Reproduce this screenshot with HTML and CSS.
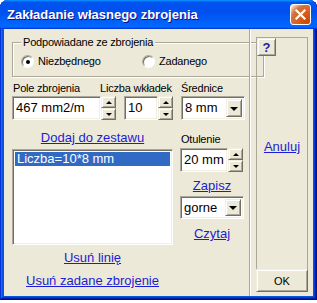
FILE: index.html
```html
<!DOCTYPE html>
<html lang="pl">
<head>
    <meta charset="UTF-8">
    <title>Zakładanie własnego zbrojenia</title>
    <link rel="stylesheet" href="styles.css">
</head>
<body>
    <div class="window">
        <div class="titlebar">
            <span class="title">Zakładanie własnego zbrojenia</span>
            <span class="close"><svg width="13" height="13" viewBox="0 0 13 13"><path d="M2.5 2.5 L10.5 10.5 M10.5 2.5 L2.5 10.5" stroke="#fff" stroke-width="2.2" stroke-linecap="square"/></svg></span>
        </div>
        <div class="client">
            <div class="main">
                <fieldset class="group">
                    <legend>Podpowiadane ze zbrojenia</legend>
                    <div class="radios">
                        <span class="radio"><span class="circle checked"></span>Niezbędnego</span>
                        <span class="radio"><span class="circle"></span>Zadanego</span>
                    </div>
                </fieldset>
                <div class="labels">
                    <span class="lbl lbl-pole">Pole zbrojenia</span>
                    <span class="lbl lbl-liczba">Liczba wkładek</span>
                    <span class="lbl">Średnice</span>
                </div>
                <div class="inputs">
                    <div class="spinbox">
                        <span class="edit edit-pole">467 mm2/m</span>
                        <span class="spin"><span class="btn up"></span><span class="btn down"></span></span>
                    </div>
                    <div class="spinbox">
                        <span class="edit edit-liczba">10</span>
                        <span class="spin"><span class="btn up"></span><span class="btn down"></span></span>
                    </div>
                    <div class="combo">
                        <span class="combo-text">8 mm</span>
                        <span class="btn drop"></span>
                    </div>
                </div>
                <div class="lower">
                    <div class="listcol">
                        <a class="link link-dodaj" href="#">Dodaj do zestawu</a>
                        <div class="list">
                            <div class="item selected">Liczba=10*8 mm</div>
                        </div>
                        <a class="link link-linia" href="#">Usuń linię</a>
                        <a class="link link-usun" href="#">Usuń zadane zbrojenie</a>
                    </div>
                    <div class="optcol">
                        <span class="lbl lbl-otul">Otulenie</span>
                        <div class="spinbox spin-otul">
                            <span class="edit edit-otul">20 mm</span>
                            <span class="spin"><span class="btn up"></span><span class="btn down"></span></span>
                        </div>
                        <a class="link link-zapisz" href="#">Zapisz</a>
                        <div class="combo combo-gorne">
                            <span class="combo-text">gorne</span>
                            <span class="btn drop"></span>
                        </div>
                        <a class="link link-czytaj" href="#">Czytaj</a>
                    </div>
                </div>
            </div>
            <div class="side">
                <div class="panel">
                    <span class="btn help">?</span>
                    <a class="link link-anuluj" href="#">Anuluj</a>
                    <span class="btn ok">OK</span>
                </div>
            </div>
        </div>
    </div>
</body>
</html>
```

FILE: styles.css
```css
body { margin: 0; background: #fff; font-family: "Liberation Sans", Arial, sans-serif; }

/* window frame */
.window { width: 317px; height: 300px; display: flex; flex-direction: column; background: #0855dd; border-radius: 8px 8px 0 0; box-shadow: inset -1px -1px #00138c, inset 1px 1px #0831d9, inset -2px -2px #001ea0, inset 2px 2px #166aee, inset -3px -3px #003bda, inset 3px 3px #0855dd; }
.titlebar { height: 29px; display: flex; align-items: center; justify-content: space-between; padding: 0 6px 0 7px; border-radius: 8px 8px 0 0; background: linear-gradient(180deg, #0997ff, #0053ee 8%, #0050ee 40%, #06f 88%, #06f 93%, #005bff 95%, #003dd7 96%, #003dd7); }
.title { font-weight: bold; font-size: 13px; color: #fff; text-shadow: 1px 1px #0f1089; }
.close { width: 19px; height: 19px; border: 1px solid #fff; border-radius: 3px; display: flex; align-items: center; justify-content: center; background: radial-gradient(circle at 90% 90%, #cc4600 0%, #dc6527 55%, #cd7546 70%, #ffccb2 90%, #fff 100%); }
.client { flex: 1; margin: 0 4px 4px 4px; background: #ece9d8; display: flex; color: #000; }

/* left part */
.main { width: 245px; padding: 6px 0 0 8px; box-sizing: border-box; }
.group { margin: 0; width: 234px; height: 42px; box-sizing: border-box; padding: 0 0 0 8px; border: 1px solid #aca899; box-shadow: inset 1px 1px #fff, 1px 1px #fff; }
.group legend { padding: 0 2px; font-size: 11px; letter-spacing: -0.2px; line-height: 14px; background: #ece9d8; }
.radios { display: flex; margin-top: 5px; font-size: 11px; letter-spacing: -0.2px; line-height: 14px; }
.radio { width: 121px; display: flex; align-items: center; gap: 4px; }
.circle { width: 11px; height: 11px; border-radius: 50%; background: #fff; border: 1px solid; border-color: #aca899 #fff #fff #aca899; box-shadow: inset 1px 1px #716f64; position: relative; }
.circle.checked::after { content: ""; position: absolute; left: 4px; top: 4px; width: 4px; height: 4px; border-radius: 50%; background: #000; }

.lbl { font-size: 11px; letter-spacing: -0.2px; line-height: 14px; white-space: nowrap; }
.labels { display: flex; margin-top: 4px; height: 14px; }
.lbl-pole { width: 87px; padding-left: 1px; }
.lbl-liczba { width: 81px; }

.inputs { display: flex; gap: 8px; margin-top: 1px; height: 24px; }
.spinbox { display: flex; height: 24px; }
.edit, .combo { box-sizing: border-box; height: 100%; background: #fff; border: 1px solid; border-color: #aca899 #fff #fff #aca899; box-shadow: inset 1px 1px #716f64, inset -1px -1px #f1efe2; font-size: 13px; line-height: 22px; padding-left: 3px; white-space: nowrap; }
.edit-pole { width: 89px; }
.edit-liczba { width: 34px; }
.spin { width: 15px; display: flex; flex-direction: column; }
.btn { box-sizing: border-box; background: #ece9d8; border: 1px solid; border-color: #f1efe2 #716f64 #716f64 #f1efe2; box-shadow: inset 1px 1px #fff, inset -1px -1px #aca899; display: flex; align-items: center; justify-content: center; }
.spin .btn { flex: 1; }
.up::after { content: ""; border: 3px solid transparent; border-top: 0; border-bottom: 3px solid #000; }
.down::after { content: ""; border: 3px solid transparent; border-bottom: 0; border-top: 3px solid #000; }
.combo { width: 64px; display: flex; justify-content: space-between; padding: 2px 2px 2px 3px; line-height: 18px; }
.drop { width: 16px; }
.drop::after { content: ""; border: 4px solid transparent; border-bottom: 0; border-top: 4px solid #000; margin-top: 1px; }

.lower { display: flex; gap: 7px; }
.link { color: #1c1cd4; font-size: 13px; line-height: 17px; text-decoration: underline; white-space: nowrap; }
.listcol { width: 161px; display: flex; flex-direction: column; align-items: center; }
.link-dodaj { margin-top: 9px; }
.list { align-self: stretch; height: 96px; margin-top: 3px; box-sizing: border-box; background: #fff; border: 1px solid; border-color: #aca899 #fff #fff #aca899; box-shadow: inset 1px 1px #716f64, inset -1px -1px #f1efe2; padding: 2px; }
.item { font-size: 13px; line-height: 14px; height: 14px; padding-left: 2px; }
.item.selected { background: #316ac5; color: #fff; }
.link-linia { margin-top: 4px; }
.link-usun { margin-top: 6px; }

.optcol { width: 64px; display: flex; flex-direction: column; align-items: center; }
.lbl-otul { align-self: flex-start; margin-top: 12px; padding-left: 1px; }
.spin-otul { margin-top: 2px; align-self: flex-start; }
.edit-otul { width: 48px; }
.link-zapisz { margin-top: 5px; }
.combo-gorne { margin-top: 2px; height: 23px; }
.link-czytaj { margin-top: 6px; }

/* right part */
.side { flex: 1; display: flex; border-left: 1px solid #aca899; box-shadow: inset 1px 0 #fff; padding: 8px 5px 4px 6px; }
.panel { flex: 1; display: flex; flex-direction: column; align-items: center; border: 1px solid #aca899; border-bottom: 0; }
.help { align-self: flex-start; width: 19px; height: 18px; color: #1d1da8; font-weight: bold; font-size: 13px; }
.link-anuluj { margin-top: 82px; }
.ok { margin-top: auto; align-self: stretch; height: 23px; font-size: 11px; margin-left: -1px; margin-right: -1px; }
```
